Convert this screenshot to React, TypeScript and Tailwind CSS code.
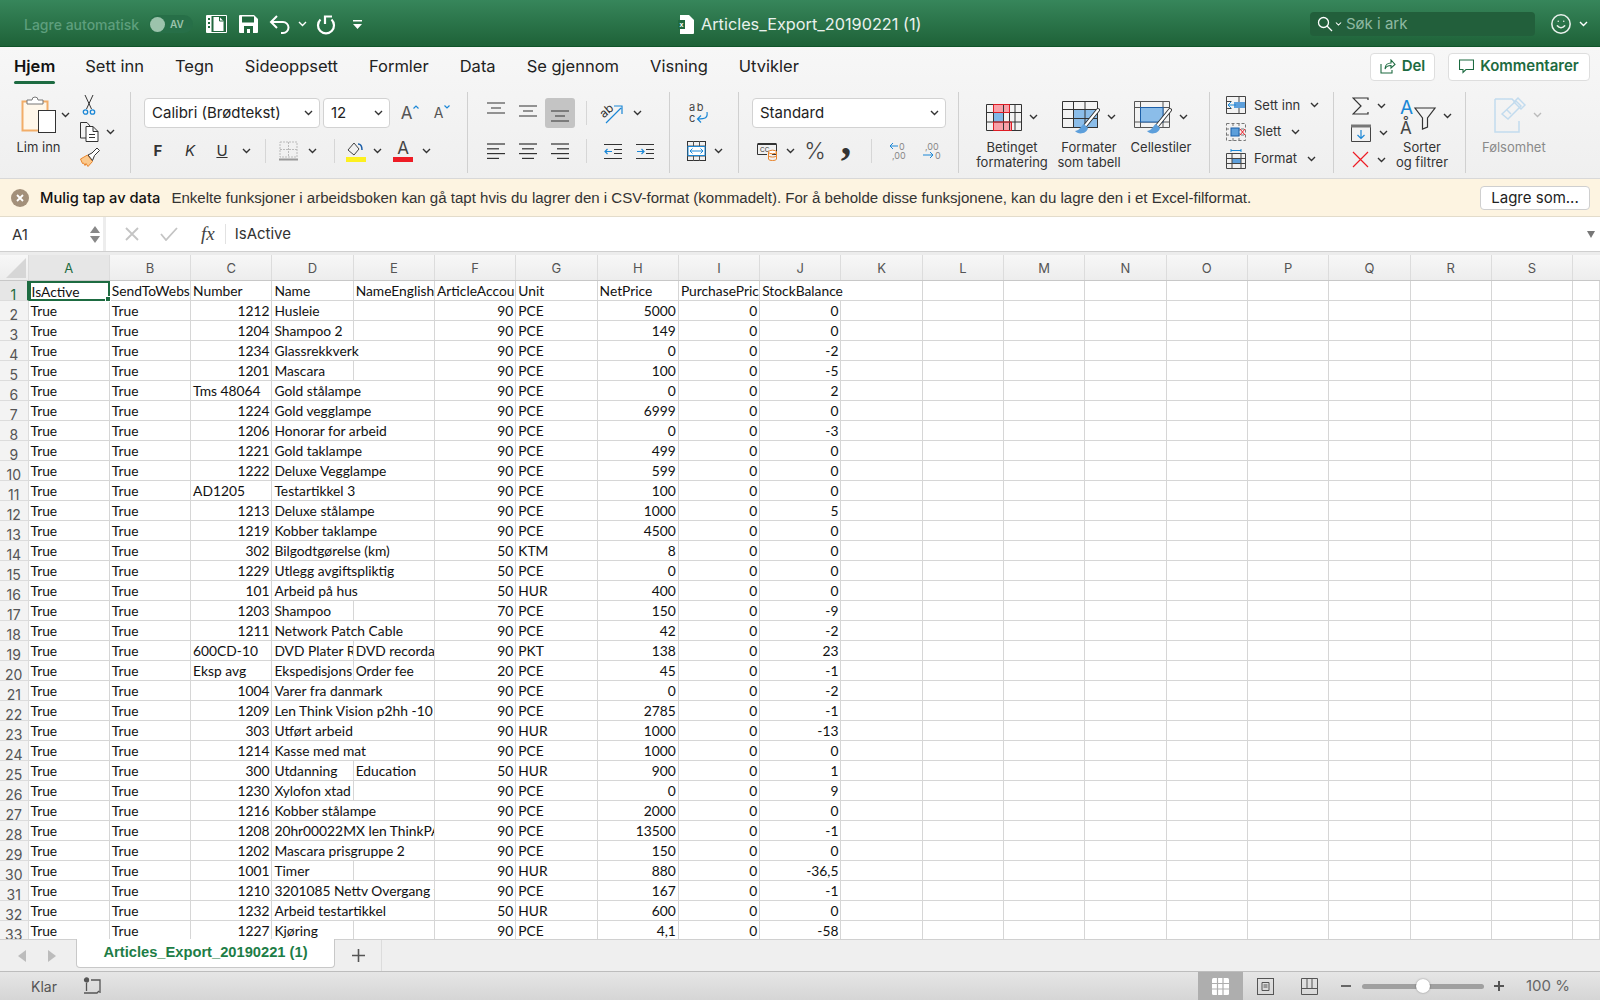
import { Smile } from 'lucide-react';

const UI = "font-['Inter',sans-serif]";

type Row = [string, string, string?, string?, string?, string?, string?, string?];

const rows: Row[] = [
  ['1212', 'Husleie', '', '90', 'PCE', '5000', '0'],
  ['1204', 'Shampoo 2', '', '90', 'PCE', '149', '0'],
  ['1234', 'Glassrekkverk', '', '90', 'PCE', '0', '-2'],
  ['1201', 'Mascara', '', '90', 'PCE', '100', '-5'],
  ['Tms 48064', 'Gold stålampe', '', '90', 'PCE', '0', '2'],
  ['1224', 'Gold vegglampe', '', '90', 'PCE', '6999', '0'],
  ['1206', 'Honorar for arbeid', '', '90', 'PCE', '0', '-3'],
  ['1221', 'Gold taklampe', '', '90', 'PCE', '499', '0'],
  ['1222', 'Deluxe Vegglampe', '', '90', 'PCE', '599', '0'],
  ['AD1205', 'Testartikkel 3', '', '90', 'PCE', '100', '0'],
  ['1213', 'Deluxe stålampe', '', '90', 'PCE', '1000', '5'],
  ['1219', 'Kobber taklampe', '', '90', 'PCE', '4500', '0'],
  ['302', 'Bilgodtgørelse (km)', '', '50', 'KTM', '8', '0'],
  ['1229', 'Utlegg avgiftspliktig', '', '50', 'PCE', '0', '0'],
  ['101', 'Arbeid på hus', '', '50', 'HUR', '400', '0'],
  ['1203', 'Shampoo', '', '70', 'PCE', '150', '-9'],
  ['1211', 'Network Patch Cable', '', '90', 'PCE', '42', '-2'],
  ['600CD-10', 'DVD Plater R', 'DVD recorda', '90', 'PKT', '138', '23'],
  ['Eksp avg', 'Ekspedisjons', 'Order fee', '20', 'PCE', '45', '-1'],
  ['1004', 'Varer fra danmark', '', '90', 'PCE', '0', '-2'],
  ['1209', 'Len Think Vision p2hh -10', '', '90', 'PCE', '2785', '-1'],
  ['303', 'Utført arbeid', '', '90', 'HUR', '1000', '-13'],
  ['1214', 'Kasse med mat', '', '90', 'PCE', '1000', '0'],
  ['300', 'Utdanning', 'Education', '50', 'HUR', '900', '1'],
  ['1230', 'Xylofon xtad', '', '90', 'PCE', '0', '9'],
  ['1216', 'Kobber stålampe', '', '90', 'PCE', '2000', '0'],
  ['1208', '20hr00022MX len ThinkPA', '', '90', 'PCE', '13500', '-1'],
  ['1202', 'Mascara prisgruppe 2', '', '90', 'PCE', '150', '0'],
  ['1001', 'Timer', '', '90', 'HUR', '880', '-36,5'],
  ['1210', '3201085 Nettv Overgang t', '', '90', 'PCE', '167', '-1'],
  ['1232', 'Arbeid testartikkel', '', '50', 'HUR', '600', '0'],
  ['1227', 'Kjøring', '', '90', 'PCE', '4,1', '-58'],
];

const shortNames = ['Husleie', 'Shampoo 2', 'Mascara', 'Shampoo', 'Timer', 'Kjøring', 'Xylofon xtad'];
const columns = 'ABCDEFGHIJKLMNOPQRS'.split('');
const headers = ['IsActive', 'SendToWebs', 'Number', 'Name', 'NameEnglish', 'ArticleAccou', 'Unit', 'NetPrice', 'PurchasePric'];

function Chev({ className = 'text-[#333]' }: { className?: string }) {
  return (
    <svg width="9" height="6" viewBox="0 0 9 6" fill="none" stroke="currentColor" strokeWidth="1.4" className={`shrink-0 ${className}`}>
      <path d="M1 1l3.5 3.5L8 1" />
    </svg>
  );
}

function Sep() {
  return <div className="h-[24px] w-px bg-[#d6d6d6]" />;
}

function Slot({ w = 'w-[32px]', children }: { w?: string; children: React.ReactNode }) {
  return <div className={`flex h-full shrink-0 items-center justify-center ${w}`}>{children}</div>;
}

// vertical alignment icons: wide / short / wide, moved up or down in the box
function VAlign({ top }: { top: number }) {
  return (
    <svg width="20" height="24" viewBox="0 0 20 24" stroke="#333" strokeWidth="1.2" fill="none">
      <path d={`M1 ${top}H19M5 ${top + 5}H15M1 ${top + 10}H19`} />
    </svg>
  );
}

function Lines({ rows: lines }: { rows: [number, number][] }) {
  return (
    <svg width="20" height="18" viewBox="0 0 20 18" stroke="#333" strokeWidth="1.2" fill="none">
      {lines.map(([a, b], i) => (
        <path key={i} d={`M${a} ${2 + i * 4.8}H${b}`} />
      ))}
    </svg>
  );
}

function Indent({ right }: { right?: boolean }) {
  return (
    <svg width="18" height="17" viewBox="0 0 18 17" fill="none" strokeWidth="1.2">
      <path stroke="#333" d="M0 1.500h18M10 6.500h8M10 10.500h8M0 15.500h18" />
      <path stroke="#1b87d6" d={right ? 'M1 8.500h7M5.500 6 8 8.500 5.500 11' : 'M8 8.500H1M3.500 6 1 8.500 3.500 11'} />
    </svg>
  );
}

function Select({ w, label }: { w: string; label: string }) {
  return (
    <div className={`flex h-[30px] items-center justify-between rounded-[4px] border border-[#d2d2d2] bg-white pl-[7px] pr-[6px] text-[15px] text-[#222] ${w}`}>
      <span>{label}</span>
      <Chev />
    </div>
  );
}

function Brush() {
  return (
    <>
      <path d="M36 9 23 25" stroke="#333" strokeWidth="4" strokeLinecap="round" />
      <path d="M36 9 23 25" stroke="#fff" strokeWidth="2.200" strokeLinecap="round" />
      <path d="M22 23c-3 1-3 6-9 7 3 4 12 3 13-3z" fill="#5d9fdb" />
    </>
  );
}

function TitleBar() {
  return (
    <div className="flex h-[47px] shrink-0 items-center border-b border-[#0f5429] bg-gradient-to-b from-[#37865b] to-[#1e6238] pl-[24px] pr-[12px] pt-[2px] text-white">
      <span className="w-[116px] text-[14px] font-medium text-[#5e9f7d]">Lagre automatisk</span>
      <div className="ml-[9px] flex h-[18px] w-[44px] items-center rounded-full bg-[#276f48] pl-[1px]">
        <div className="h-[15px] w-[15px] rounded-full bg-[#9cc3ac]" />
        <span className="ml-[5px] text-[10px] font-semibold text-[#9cc3ac]">AV</span>
      </div>
      <svg width="21" height="18" viewBox="0 0 21 18" className="ml-[13px]">
        <rect width="21" height="18" rx="1" fill="#fff" />
        <rect x="5.500" y="1" width="14.500" height="16" fill="#22683f" />
        <path d="M7.500 2h6l4 4v10h-10z" fill="#fff" />
        <path d="M13.500 2v4h4" fill="none" stroke="#22683f" />
        <path d="M2 3h2v2H2zM2 7h2v2H2zM2 11h2v2H2z" fill="#22683f" />
      </svg>
      <svg width="19" height="18" viewBox="0 0 19 18" className="ml-[12px]">
        <path d="M1 0h14l4 4v13a1 1 0 0 1-1 1H1a1 1 0 0 1-1-1V1a1 1 0 0 1 1-1z" fill="#fff" />
        <rect x="3" y="1.500" width="12" height="6" fill="#22683f" />
        <rect x="5" y="11" width="9" height="7" fill="#22683f" />
        <rect x="8" y="14" width="3" height="4" fill="#fff" />
      </svg>
      <svg width="22" height="20" viewBox="0 0 22 20" fill="none" stroke="#fff" strokeWidth="2" className="ml-[11px]">
        <path d="M8 2 2 8l6 6M2 8h12a5.500 5.500 0 0 1 0 11h-2" />
      </svg>
      <Chev className="ml-[7px] text-white" />
      <svg width="20" height="21" viewBox="0 0 20 21" fill="none" stroke="#fff" strokeWidth="2.200" className="ml-[9px]">
        <path d="M4.500 5.500A8 8 0 1 0 15.500 5.500" />
        <path d="M16 2.500H9V10" />
      </svg>
      <svg width="9" height="11" viewBox="0 0 9 11" className="ml-[17px]">
        <path d="M0 1h9v1.500H0zM0 5h9L4.500 10z" fill="#fff" />
      </svg>

      <div className="ml-[316px] flex items-center gap-[6px]">
        <svg width="17" height="19" viewBox="0 0 17 19">
          <path d="M2 0h9l5 5v13a1 1 0 0 1-1 1H2z" fill="#fff" />
          <rect x="0" y="5" width="7" height="9" fill="#1f6a3f" />
          <text x="1.500" y="12" fontSize="7" fontWeight="700" fill="#fff" fontFamily="Liberation Sans">x</text>
        </svg>
        <span className="text-[16.300px] text-[#e9f1ec]">Articles_Export_20190221 (1)</span>
      </div>

      <div className="ml-auto flex h-[24px] w-[225px] items-center rounded-[4px] bg-[#225f3b] pl-[7px]">
        <svg width="16" height="16" viewBox="0 0 16 16" fill="none" stroke="#fff" strokeWidth="1.300">
          <circle cx="6.500" cy="6.500" r="5" />
          <path d="M10 10l5 5" />
        </svg>
        <Chev className="ml-[1px] scale-75 text-white" />
        <span className="ml-[3px] text-[15px] text-[#8fb9a2]">Søk i ark</span>
      </div>
      <Smile className="ml-[15px] text-[#e9f1ec]" size={22} strokeWidth={1.700} />
      <Chev className="ml-[7px] text-white" />
    </div>
  );
}

function Tabs() {
  const items = ['Sett inn', 'Tegn', 'Sideoppsett', 'Formler', 'Data', 'Se gjennom', 'Visning', 'Utvikler'];
  return (
    <div className="flex h-[38px] shrink-0 items-center pl-[14px] pr-[10px] pt-[1px] text-[16.500px] text-[#222]">
      <div className="relative mr-[30px] font-semibold text-[#111]">
        Hjem
        <div className="absolute -bottom-[5px] left-0 right-0 h-[3px] rounded-full bg-[#1d6b41]" />
      </div>
      <div className="flex gap-[31px]">
        {items.map((t) => (
          <span key={t}>{t}</span>
        ))}
      </div>
      <div className="ml-auto flex h-[28px] w-[65px] items-center justify-center gap-[6px] rounded-[4px] border border-[#dedede] bg-white text-[15px] font-semibold text-[#1d6b41]">
        <svg width="16" height="15" viewBox="0 0 16 15" fill="none" stroke="#1d6b41" strokeWidth="1.100">
          <path d="M1 5v9h11v-3M5 10c0-4 3-6 6-6V1l4 4.500L11 9V6.500c-3 0-5 1-6 3.500z" />
        </svg>
        Del
      </div>
      <div className="ml-[13px] flex h-[28px] w-[142px] items-center justify-center gap-[6px] rounded-[4px] border border-[#dedede] bg-white text-[15px] font-semibold text-[#1d6b41]">
        <svg width="15" height="15" viewBox="0 0 15 15" fill="none" stroke="#1d6b41" strokeWidth="1.100">
          <path d="M.5 1h14v9.500H7L4 13.500v-3H.5z" />
        </svg>
        Kommentarer
      </div>
    </div>
  );
}

function Group({ w, children }: { w: string; children: React.ReactNode }) {
  return <div className={`h-[81px] shrink-0 border-r border-[#d0d0d0] ${w}`}>{children}</div>;
}

function ClipboardGroup() {
  return (
    <Group w="w-[131px]">
      <div className="flex h-full">
        <div className="ml-[16px] flex w-[45px] flex-col items-center">
          <div className="flex h-[46px] items-center">
            <svg width="36" height="38" viewBox="0 0 36 38">
              <rect x="1.500" y="5.500" width="25" height="29" fill="#fff7ea" stroke="#f2ad68" strokeWidth="2" />
              <path d="M6 8V4h5a3 3 0 0 1 6 0h5v4z" fill="#fff" stroke="#777" />
              <rect x="17.500" y="14.500" width="17" height="22" fill="#fff" stroke="#333" />
            </svg>
          </div>
          <span className="whitespace-nowrap text-[13px] text-[#333]">Lim inn</span>
        </div>
        <div className="mt-[20px]">
          <Chev />
        </div>
        <div className="ml-[10px] flex flex-col items-start">
          <svg width="14" height="20" viewBox="0 0 14 20" fill="none" className="ml-[2px] mt-[3px]">
            <path d="M3 0l6.500 14M11 0 4.500 14" stroke="#333" />
            <circle cx="3.500" cy="17" r="2.200" stroke="#1b87d6" strokeWidth="1.300" />
            <circle cx="10.500" cy="17" r="2.200" stroke="#1b87d6" strokeWidth="1.300" />
          </svg>
          <div className="mt-[7px] flex items-center gap-[7px]">
            <svg width="19" height="20" viewBox="0 0 19 20" fill="none" stroke="#333">
              <path d="M6 16H.5V.5H7L10 4" />
              <path d="M6 4.500h7l5 5v10H6zM13 4.500v5h5M9 12.500h6M9 15.500h6" fill="#fff" />
            </svg>
            <Chev />
          </div>
          <svg width="20" height="19" viewBox="0 0 20 19" className="mt-[6px]">
            <path d="M.5 11l7-4 5 6.500-4.500 5-2-3-1 2-1.500-2.500-1 .5z" fill="#fbc98d" stroke="#e8842c" />
            <path d="M8 7l4-2 5-5 2.500 2.500-5 5-2 5z" fill="#fff" stroke="#333" />
          </svg>
        </div>
      </div>
    </Group>
  );
}

function FontGroup() {
  return (
    <Group w="w-[337px]">
      <div className="flex h-[40px] items-center pl-[13px] pt-[2px]">
        <Select w="w-[176px]" label="Calibri (Brødtekst)" />
        <Select w="ml-[3px] w-[67px]" label="12" />
        <div className="ml-[4px] flex w-[32px] items-start justify-center gap-[1px]">
          <span className="text-[17px] leading-[20px] text-[#555]">A</span>
          <svg width="6" height="4" viewBox="0 0 6 4" fill="none" stroke="#1b87d6" strokeWidth="1.200" className="mt-[2px]">
            <path d="M.5 3.500 3 1l2.500 2.500" />
          </svg>
        </div>
        <div className="flex w-[32px] items-start justify-center gap-[1px]">
          <span className="text-[14px] leading-[20px] text-[#555]">A</span>
          <svg width="6" height="4" viewBox="0 0 6 4" fill="none" stroke="#1b87d6" strokeWidth="1.200" className="mt-[2px]">
            <path d="M.5.500 3 3 5.500.500" />
          </svg>
        </div>
      </div>
      <div className="flex h-[38px] items-center pl-[11px]">
        <Slot>
          <span className="text-[15px] font-bold text-[#333]">F</span>
        </Slot>
        <Slot>
          <span className="text-[15px] italic text-[#333]">K</span>
        </Slot>
        <Slot>
          <span className="text-[15px] text-[#333] underline">U</span>
        </Slot>
        <Slot w="w-[16px]">
          <Chev />
        </Slot>
        <div className="ml-[11px]">
          <Sep />
        </div>
        <Slot w="w-[38px] pl-[6px]">
          <svg width="19" height="20" viewBox="0 0 19 20" fill="none">
            <path d="M1 1h17v15H1zM9.500 1v15M1 8.500h17" stroke="#bbb" strokeDasharray="2 1" />
            <path d="M0 18.500h19" stroke="#999" strokeWidth="2" />
          </svg>
        </Slot>
        <Slot w="w-[16px]">
          <Chev />
        </Slot>
        <div className="ml-[14px]">
          <Sep />
        </div>
        <Slot w="w-[36px] pl-[6px]">
          <svg width="20" height="21" viewBox="0 0 20 21" fill="none">
            <path d="M2 9l6-7 5 6-5 6z" stroke="#444" />
            <path d="M12 3c3 0 4 2 4 6" stroke="#1b5ea8" strokeWidth="1.500" />
            <rect x="0" y="16" width="20" height="5" fill="#fdf01f" />
          </svg>
        </Slot>
        <Slot w="w-[12px]">
          <Chev />
        </Slot>
        <Slot w="w-[34px] pl-[6px]">
          <div className="flex flex-col items-center">
            <span className="text-[17px] leading-[15px] text-[#444]">A</span>
            <div className="mt-[1px] h-[5px] w-[20px] bg-[#ee1c25]" />
          </div>
        </Slot>
        <Slot w="w-[18px]">
          <Chev />
        </Slot>
      </div>
    </Group>
  );
}

function AlignGroup() {
  return (
    <Group w="w-[202px]">
      <div className="flex h-[40px] items-center pl-[12px] pt-[2px]">
        <Slot>
          <VAlign top={2} />
        </Slot>
        <Slot>
          <VAlign top={5} />
        </Slot>
        <Slot>
          <div className="flex h-[30px] w-[30px] items-center justify-center rounded-[3px] bg-[#c4c4c4]">
            <VAlign top={10} />
          </div>
        </Slot>
        <div className="ml-[10px] mr-[9px]">
          <Sep />
        </div>
        <svg width="26" height="24" viewBox="0 0 26 24" fill="none" className="ml-[3px]">
          <text x="2" y="14" fontSize="12" fill="#333" fontFamily="Inter" transform="rotate(-40 8 12)">ab</text>
          <path d="M7 22 22 7M15 5h8v8" stroke="#1b87d6" strokeWidth="1.200" />
        </svg>
        <Chev className="ml-[8px] text-[#333]" />
      </div>
      <div className="flex h-[38px] items-center pl-[12px]">
        <Slot>
          <Lines rows={[[1, 19], [1, 13], [1, 19], [1, 13]]} />
        </Slot>
        <Slot>
          <Lines rows={[[1, 19], [4, 16], [1, 19], [4, 16]]} />
        </Slot>
        <Slot>
          <Lines rows={[[1, 19], [7, 19], [1, 19], [7, 19]]} />
        </Slot>
        <div className="ml-[10px] mr-[11px]">
          <Sep />
        </div>
        <Slot w="w-[30px]">
          <Indent />
        </Slot>
        <Slot w="w-[34px]">
          <Indent right />
        </Slot>
      </div>
    </Group>
  );
}

function WrapGroup() {
  return (
    <Group w="w-[69px]">
      <div className="flex h-[40px] items-center pl-[19px] pt-[2px]">
        <svg width="20" height="22" viewBox="0 0 20 22" fill="none">
          <text x="0" y="9" fontSize="11" fill="#444" fontFamily="Inter" letterSpacing="1.500">ab</text>
          <text x="0" y="20" fontSize="11" fill="#444" fontFamily="Inter">c</text>
          <path d="M18 10c1 6-2 7-9 7M12 13.500 8.500 17l3.500 3.500" stroke="#1b87d6" strokeWidth="1.200" />
        </svg>
      </div>
      <div className="flex h-[38px] items-center gap-[8px] pl-[17px]">
        <svg width="19" height="20" viewBox="0 0 19 20" fill="none">
          <rect x=".5" y=".5" width="18" height="19" stroke="#333" />
          <path d="M6.500 0v5M12.500 0v5M6.500 15v5M12.500 15v5M0 5h19M0 15h19" stroke="#555" />
          <rect x="1" y="5.500" width="17" height="9" fill="#fff" stroke="#1b87d6" />
          <path d="M3 10h13M5.500 7.500 3 10l2.500 2.500M13.500 7.500 16 10l-2.500 2.500" stroke="#1b87d6" />
        </svg>
        <Chev />
      </div>
    </Group>
  );
}

function NumberGroup() {
  return (
    <Group w="w-[220px]">
      <div className="flex h-[40px] items-center pl-[13px] pt-[2px]">
        <Select w="w-[194px]" label="Standard" />
      </div>
      <div className="flex h-[38px] items-center pl-[18px]">
        <svg width="21" height="19" viewBox="0 0 21 19" fill="none">
          <path d="M.5 2.500h19v10H15M.5 2.500v10H10" stroke="#333" />
          <path d="M.5 2h19" stroke="#333" strokeWidth="2" />
          <text x="3" y="10" fontSize="6.500" fill="#333" fontFamily="Inter">CC</text>
          <ellipse cx="15.500" cy="10" rx="4" ry="1.800" fill="#fff" stroke="#e8842c" />
          <path d="M11.500 10v7c0 2 8 2 8 0v-7M11.500 13.500c0 2 8 2 8 0" stroke="#e8842c" />
        </svg>
        <Chev className="ml-[8px] text-[#333]" />
        <Slot w="w-[40px]">
          <span className="text-[23px] font-light text-[#444]">%</span>
        </Slot>
        <Slot w="w-[22px]">
          <span className="-translate-y-[11px] font-['Liberation_Serif',serif] text-[42px] font-bold leading-[20px] text-[#333]">,</span>
        </Slot>
        <div className="ml-[14px] mr-[17px]">
          <Sep />
        </div>
        <svg width="20" height="20" viewBox="0 0 20 20" fill="none">
          <text x="10" y="9" fontSize="9" fill="#888" fontFamily="Inter">0</text>
          <text x="3" y="18" fontSize="9" fill="#888" fontFamily="Inter">,00</text>
          <path d="M9 5H1M4 2 1 5l3 3" stroke="#1b87d6" />
        </svg>
        <svg width="20" height="20" viewBox="0 0 20 20" fill="none" className="ml-[13px]">
          <text x="3" y="9" fontSize="9" fill="#888" fontFamily="Inter">,00</text>
          <text x="13" y="18" fontSize="9" fill="#888" fontFamily="Inter">0</text>
          <path d="M1 14h10M8 11l3 3-3 3" stroke="#1b87d6" />
        </svg>
      </div>
    </Group>
  );
}

function BigButton({ w, icon, label }: { w: string; icon: React.ReactNode; label: React.ReactNode }) {
  return (
    <div className={`flex shrink-0 flex-col items-center ${w}`}>
      <div className="flex h-[48px] items-center gap-[7px] pt-[2px]">
        {icon}
        <Chev />
      </div>
      <div className="whitespace-nowrap text-center text-[13px] leading-[15px] text-[#333]">{label}</div>
    </div>
  );
}

function StylesGroup() {
  return (
    <Group w="w-[251px]">
      <div className="flex pl-[7px]">
        <BigButton
          w="w-[92px]"
          label={
            <>
              Betinget
              <br />
              formatering
            </>
          }
          icon={
            <svg width="36" height="27" viewBox="0 0 36 27" fill="none">
              <rect x="7.500" y=".5" width="16" height="8" fill="#f8a0a8" />
              <rect x="7.500" y="9" width="10" height="9" fill="#7fb8e8" />
              <rect x="7.500" y="18" width="18" height="8.500" fill="#f8a0a8" />
              <path d="M.5.500h35v26H.5zM7.500 0v27M17.500 0v27M23.500 0v27M29 0v27M0 8.500h36M0 18h36" stroke="#333" />
              <path d="M7.500.500h16v8h-16zM7.500 18h18v8.500h-18z" stroke="#e01c24" />
            </svg>
          }
        />
        <BigButton
          w="w-[62px]"
          label={
            <>
              Formater
              <br />
              som tabell
            </>
          }
          icon={
            <svg width="38" height="33" viewBox="0 0 38 33" fill="none">
              <rect x="11.500" y="8.500" width="24" height="18" fill="#8bbde9" stroke="#1d5fa8" />
              <path d="M.5.500h35v26H.5zM11.500 0v27M23 0v27M0 8.500h36M0 17.500h36" stroke="#333" />
              <Brush />
            </svg>
          }
        />
        <BigButton
          w="w-[82px]"
          label="Cellestiler"
          icon={
            <svg width="38" height="33" viewBox="0 0 38 33" fill="none">
              <path d="M.5.500h35v26H.5zM6.500 0v27M29 0v27M0 6.500h36M0 21h36" stroke="#555" />
              <rect x="6.500" y="6.500" width="22.500" height="14.500" fill="#8bbde9" stroke="#1d5fa8" />
              <Brush />
            </svg>
          }
        />
      </div>
    </Group>
  );
}

function CellRow({ icon, label }: { icon: React.ReactNode; label: string }) {
  return (
    <div className="flex h-[27.500px] items-center gap-[8px] pl-[16px] text-[13px] text-[#333]">
      {icon}
      <span>{label}</span>
      <Chev className="ml-[2px] text-[#333]" />
    </div>
  );
}

function CellsGroup() {
  return (
    <Group w="w-[124px]">
      <div className="flex h-full flex-col justify-center pb-[1px]">
        <CellRow
          label="Sett inn"
          icon={
            <svg width="20" height="18" viewBox="0 0 20 18" fill="none">
              <path d="M.5.500h19v17H.5zM.5 5.500h5M.5 12.500h5M13 .5v17" stroke="#444" />
              <rect x="8" y="6" width="11" height="6" fill="#5d9fdb" />
              <path d="M10 9H2M5 6 2 9l3 3" stroke="#1b87d6" />
            </svg>
          }
        />
        <CellRow
          label="Slett"
          icon={
            <svg width="20" height="18" viewBox="0 0 20 18" fill="none">
              <path d="M.5.500h19v17H.5zM7 0v18M13 0v18M0 6h20M0 12h20" stroke="#777" strokeDasharray="3 2" />
              <rect x="5" y="5" width="8" height="8" fill="#5d9fdb" stroke="#1b5ea8" />
              <path d="M14 6l5 6M19 6l-5 6" stroke="#ee1c25" />
            </svg>
          }
        />
        <CellRow
          label="Format"
          icon={
            <svg width="20" height="20" viewBox="0 0 20 20" fill="none">
              <rect x="6" y="9" width="9" height="6" fill="#5d9fdb" />
              <path d="M.5 4.500h19v15H.5zM6 4v16M15 4v16M0 9.500h20M0 14.500h20" stroke="#444" />
              <path d="M5 1.500h10M5 0v3M15 0v3" stroke="#1b87d6" />
            </svg>
          }
        />
      </div>
    </Group>
  );
}

function EditGroup() {
  return (
    <Group w="w-[132px]">
      <div className="flex h-full">
        <div className="ml-[18px] flex w-[36px] flex-col">
          <div className="flex h-[27px] items-center gap-[8px]">
            <svg width="17" height="18" viewBox="0 0 17 18" fill="none" stroke="#333" strokeWidth="1.200">
              <path d="M16 3V1H1l8 8-8 8h15v-2" />
            </svg>
            <Chev />
          </div>
          <div className="flex h-[27px] items-center gap-[8px]">
            <svg width="20" height="18" viewBox="0 0 20 18" fill="none" className="-ml-[1px] shrink-0">
              <path d="M.5 1.500h19v16H.5z" stroke="#444" />
              <path d="M0 2h20" stroke="#777" strokeWidth="3" />
              <path d="M10 6v8M6.500 11l3.500 3.500 3.500-3.500" stroke="#1b87d6" strokeWidth="1.200" />
            </svg>
            <Chev />
          </div>
          <div className="flex h-[27px] items-center gap-[8px]">
            <svg width="17" height="17" viewBox="0 0 17 17" fill="none" stroke="#ee1c25" strokeWidth="1.200">
              <path d="M1 1l15 15M16 1 1 16" />
            </svg>
            <Chev />
          </div>
        </div>
        <div className="-ml-[1px] flex w-[70px] flex-col items-center">
          <div className="flex h-[48px] items-center gap-[5px]">
            <svg width="46" height="40" viewBox="0 0 46 40" fill="none">
              <text x="8" y="18" fontSize="19" fill="#1b87d6" fontFamily="Inter">A</text>
              <text x="8" y="38" fontSize="17" fill="#444" fontFamily="Inter">Å</text>
              <path d="M23 12h20l-7.500 10v9l-5 2V22z" stroke="#333" strokeWidth="1.200" />
            </svg>
            <Chev className="text-[#333]" />
          </div>
          <div className="whitespace-nowrap text-center text-[13px] leading-[15px] text-[#333]">
            Sorter
            <br />
            og filtrer
          </div>
        </div>
      </div>
    </Group>
  );
}

function Sensitivity() {
  return (
    <div className="flex h-[81px] flex-col items-center pl-[16px]">
      <div className="flex h-[46px] items-center gap-[5px] pl-[8px]">
        <svg width="34" height="38" viewBox="0 0 34 38" fill="none" stroke="#c2dbee" strokeWidth="1.500">
          <path d="M1 3h17l3 3M1 3v33h24V25" />
          <path d="M8 18 22 5l5 5-13 13zM13 14l4 4M24 2l7 7-4 4-7-7z" />
        </svg>
        <Chev className="text-[#bbb]" />
      </div>
      <span className="text-[13px] text-[#8a8a8a]">Følsomhet</span>
    </div>
  );
}

function Ribbon() {
  return (
    <div className={`shrink-0 border-b border-[#d8d8d8] bg-gradient-to-b from-[#f7f7f7] to-[#efefef] ${UI}`}>
      <Tabs />
      <div className="flex h-[93px] items-start pt-[7px]">
        <ClipboardGroup />
        <FontGroup />
        <AlignGroup />
        <WrapGroup />
        <NumberGroup />
        <StylesGroup />
        <CellsGroup />
        <EditGroup />
        <Sensitivity />
      </div>
    </div>
  );
}

function MessageBar() {
  return (
    <div className="flex h-[38px] shrink-0 items-center border-b border-[#e3dccb] bg-[#fdf4e1] pl-[11px] pr-[10px] pt-[1px] font-['Liberation_Sans',sans-serif] text-[15.050px] text-[#222]">
      <div className="flex h-[18px] w-[18px] items-center justify-center rounded-full bg-[#a3907a]">
        <svg width="8" height="8" viewBox="0 0 8 8" stroke="#fff" strokeWidth="1.800">
          <path d="M1 1l6 6M7 1 1 7" />
        </svg>
      </div>
      <span className="ml-[11px] font-['Inter',sans-serif] text-[14.700px] font-medium text-[#111]">Mulig tap av data</span>
      <span className="ml-[11px] whitespace-nowrap text-[#333]">
        Enkelte funksjoner i arbeidsboken kan gå tapt hvis du lagrer den i CSV-format (kommadelt). For å beholde disse funksjonene, kan du lagre den i et Excel-filformat.
      </span>
      <div className="ml-auto flex h-[24px] w-[110px] items-center justify-center rounded-[4px] border border-[#cfcfcf] bg-white font-['Inter',sans-serif] text-[15px] text-[#222]">
        Lagre som...
      </div>
    </div>
  );
}

function FormulaBar() {
  return (
    <div className={`flex h-[35px] shrink-0 items-stretch border-b border-[#cfcfcf] bg-white ${UI}`}>
      <div className="flex w-[106px] items-center justify-between border-r-[3px] border-[#ededed] pl-[12px] pr-[3px] text-[15px] text-[#333]">
        <span className="pt-[2px]">A1</span>
        <div className="flex flex-col gap-[3px]">
          <div className="h-0 w-0 border-x-[5px] border-b-[7px] border-x-transparent border-b-[#888]" />
          <div className="h-0 w-0 border-x-[5px] border-t-[7px] border-x-transparent border-t-[#888]" />
        </div>
      </div>
      <div className="flex flex-1 items-center">
        <svg width="14" height="14" viewBox="0 0 14 14" stroke="#c4c4c4" strokeWidth="1.800" className="ml-[19px]">
          <path d="M1 1l12 12M13 1 1 13" />
        </svg>
        <svg width="18" height="14" viewBox="0 0 18 14" fill="none" stroke="#c4c4c4" strokeWidth="1.800" className="ml-[21px]">
          <path d="M1 7l5 6L17 1" />
        </svg>
        <span className="ml-[23px] font-['Liberation_Serif',serif] text-[19px] italic text-[#444]">fx</span>
        <div className="ml-[10px] h-[20px] w-px bg-[#e2e2e2]" />
        <span className="ml-[9px] text-[15px] text-[#333]">IsActive</span>
        <div className="ml-auto mr-[5px] h-0 w-0 border-x-[4px] border-t-[7px] border-x-transparent border-t-[#777]" />
      </div>
    </div>
  );
}

function Cell({ children, right, className = '' }: { children?: React.ReactNode; right?: boolean; className?: string }) {
  return (
    <div className={`h-[20px] overflow-hidden whitespace-nowrap border-b border-r border-[#d6d6d6] px-[2px] leading-[20px] ${right ? 'text-right' : ''} ${className}`}>
      {children}
    </div>
  );
}

function RowHead({ n, active }: { n: number; active?: boolean }) {
  return (
    <div
      className={`flex h-[20px] justify-center border-b border-r border-[#dcdcdc] pt-[4px] font-['Inter',sans-serif] text-[14px] leading-[20px] ${
        active ? 'border-r-2 border-r-[#1d6b41] bg-[#e6e6e6] text-[#1d6b41]' : 'bg-[#f3f3f3] text-[#555]'
      }`}
    >
      {n}
    </div>
  );
}

function Sheet() {
  const grid = 'grid grid-cols-[28.500px_repeat(19,81.300px)_1fr]';
  return (
    <div className="flex min-h-0 flex-1 flex-col overflow-hidden bg-white font-['Lato',sans-serif] text-[13.800px] text-[#111]">
      <div className={`${grid} h-[26px] shrink-0 border-b border-[#c8c8c8] bg-gradient-to-b from-[#f7f7f7] to-[#ededed] font-['Inter',sans-serif] text-[13px] text-[#555]`}>
        <div className="flex items-end justify-end border-r border-[#dcdcdc] p-[2px]">
          <div className="h-0 w-0 border-b-[20px] border-l-[20px] border-b-[#d6d6d6] border-l-transparent" />
        </div>
        {columns.map((c, i) => (
          <div
            key={c}
            className={`flex items-center justify-center border-r border-[#dcdcdc] pt-[2px] ${i === 0 ? 'bg-[#e6e6e6] text-[#1d6b41]' : ''}`}
          >
            {c}
          </div>
        ))}
        <div />
      </div>

      <div className="min-h-0 flex-1 overflow-hidden">
        <div className={grid}>
          <RowHead n={1} active />
          <div className="relative h-[20px] border-2 border-[#1d6b41] pl-[1px] leading-[17px]">
            IsActive
            <div className="absolute -bottom-[3px] -right-[3px] z-10 h-[6px] w-[6px] border border-white bg-[#1d6b41]" />
          </div>
          {headers.slice(1).map((h) => (
            <Cell key={h}>{h}</Cell>
          ))}
          <Cell className="col-span-2">StockBalance</Cell>
          {columns.slice(11).map((c) => (
            <Cell key={c} />
          ))}
          <Cell />
          {rows.map((r, i) => {
            const nameSpans = !r[2] && !shortNames.includes(r[1]);
            const numeric = /^\d+$/.test(r[0]);
            return (
              <div key={r[0]} className="contents">
                <RowHead n={i + 2} />
                <Cell>True</Cell>
                <Cell>True</Cell>
                <Cell right={numeric}>{r[0]}</Cell>
                <Cell className={nameSpans ? 'col-span-2' : ''}>{r[1]}</Cell>
                {!nameSpans && <Cell>{r[2]}</Cell>}
                <Cell right>{r[3]}</Cell>
                <Cell>{r[4]}</Cell>
                <Cell right>{r[5]}</Cell>
                <Cell right>0</Cell>
                <Cell right>{r[6]}</Cell>
                {columns.slice(10).map((c) => (
                  <Cell key={c} />
                ))}
                <Cell />
              </div>
            );
          })}
        </div>
      </div>
    </div>
  );
}

function TabBar() {
  return (
    <div className="flex h-[32px] shrink-0 border-t border-[#d0d0d0] bg-[#efefef]">
      <div className="flex w-[76px] items-center gap-[22px] pl-[18px]">
        <div className="h-0 w-0 border-y-[6px] border-r-[8px] border-y-transparent border-r-[#bcbcbc]" />
        <div className="h-0 w-0 border-y-[6px] border-l-[8px] border-y-transparent border-l-[#bcbcbc]" />
      </div>
      <div className="-mt-px flex h-[29px] w-[259px] items-center justify-center rounded-b-[4px] border-x border-b border-[#c8c8c8] bg-white pb-[1px] font-['Liberation_Sans',sans-serif] text-[14.700px] font-bold text-[#1d7d46]">
        Articles_Export_20190221 (1)
      </div>
      <div className="flex w-[47px] items-center justify-center border-r border-[#dcdcdc]">
        <svg width="13" height="13" viewBox="0 0 13 13" stroke="#555" strokeWidth="1.600">
          <path d="M6.500 0v13M0 6.500h13" />
        </svg>
      </div>
    </div>
  );
}

function StatusBar() {
  return (
    <div className={`flex h-[29px] shrink-0 items-center border-t border-[#bdbdbd] bg-gradient-to-b from-[#e6e6e6] to-[#d5d5d5] text-[14px] text-[#555] ${UI}`}>
      <span className="ml-[31px]">Klar</span>
      <svg width="19" height="18" viewBox="0 0 19 18" fill="none" stroke="#555" strokeWidth="1.300" className="ml-[26px]">
        <circle cx="3.500" cy="3" r="2" fill="#555" />
        <path d="M8 3h9v13M3.500 6v8M1 16h13l2-2" />
      </svg>
      <div className="ml-auto flex h-[28px] w-[45px] items-center justify-center bg-[#aeaeae]">
        <svg width="17" height="17" viewBox="0 0 17 17">
          <rect width="17" height="17" rx="1.500" fill="#fff" />
          <path d="M0 5.500h17M0 11h17M5.500 0v17M11 0v17" stroke="#aeaeae" strokeWidth="1.200" />
        </svg>
      </div>
      <svg width="17" height="17" viewBox="0 0 17 17" fill="none" stroke="#555" className="ml-[14px]">
        <rect x=".5" y=".5" width="16" height="16" />
        <path d="M5 4.500h7v8H5zM6.500 7h4M6.500 9h4" />
      </svg>
      <svg width="17" height="17" viewBox="0 0 17 17" fill="none" stroke="#555" className="ml-[27px]">
        <path d="M.5 10.500h16M6 .5v10M11 .5v10M.5.500h16v16H.5z" />
      </svg>
      <svg width="10" height="2" viewBox="0 0 10 2" className="ml-[23px]">
        <rect width="10" height="2" fill="#666" />
      </svg>
      <div className="ml-[11px] flex h-[5px] w-[122px] items-center justify-center rounded-full bg-[#a0a0a0]">
        <div className="h-[14px] w-[14px] rounded-full bg-white shadow-[0_0_2px_rgba(0,0,0,0.4)]" />
      </div>
      <svg width="10" height="10" viewBox="0 0 10 10" stroke="#555" strokeWidth="2" className="ml-[10px]">
        <path d="M5 0v10M0 5h10" />
      </svg>
      <span className="ml-[22px] mr-[30px] text-[15px] text-[#666]">100 %</span>
    </div>
  );
}

export default function App() {
  return (
    <div className={`flex h-[1000px] w-[1600px] flex-col overflow-hidden bg-white ${UI}`}>
      <TitleBar />
      <Ribbon />
      <MessageBar />
      <FormulaBar />
      <div className="h-[3px] shrink-0 bg-[#ececec]" />
      <Sheet />
      <TabBar />
      <StatusBar />
    </div>
  );
}
